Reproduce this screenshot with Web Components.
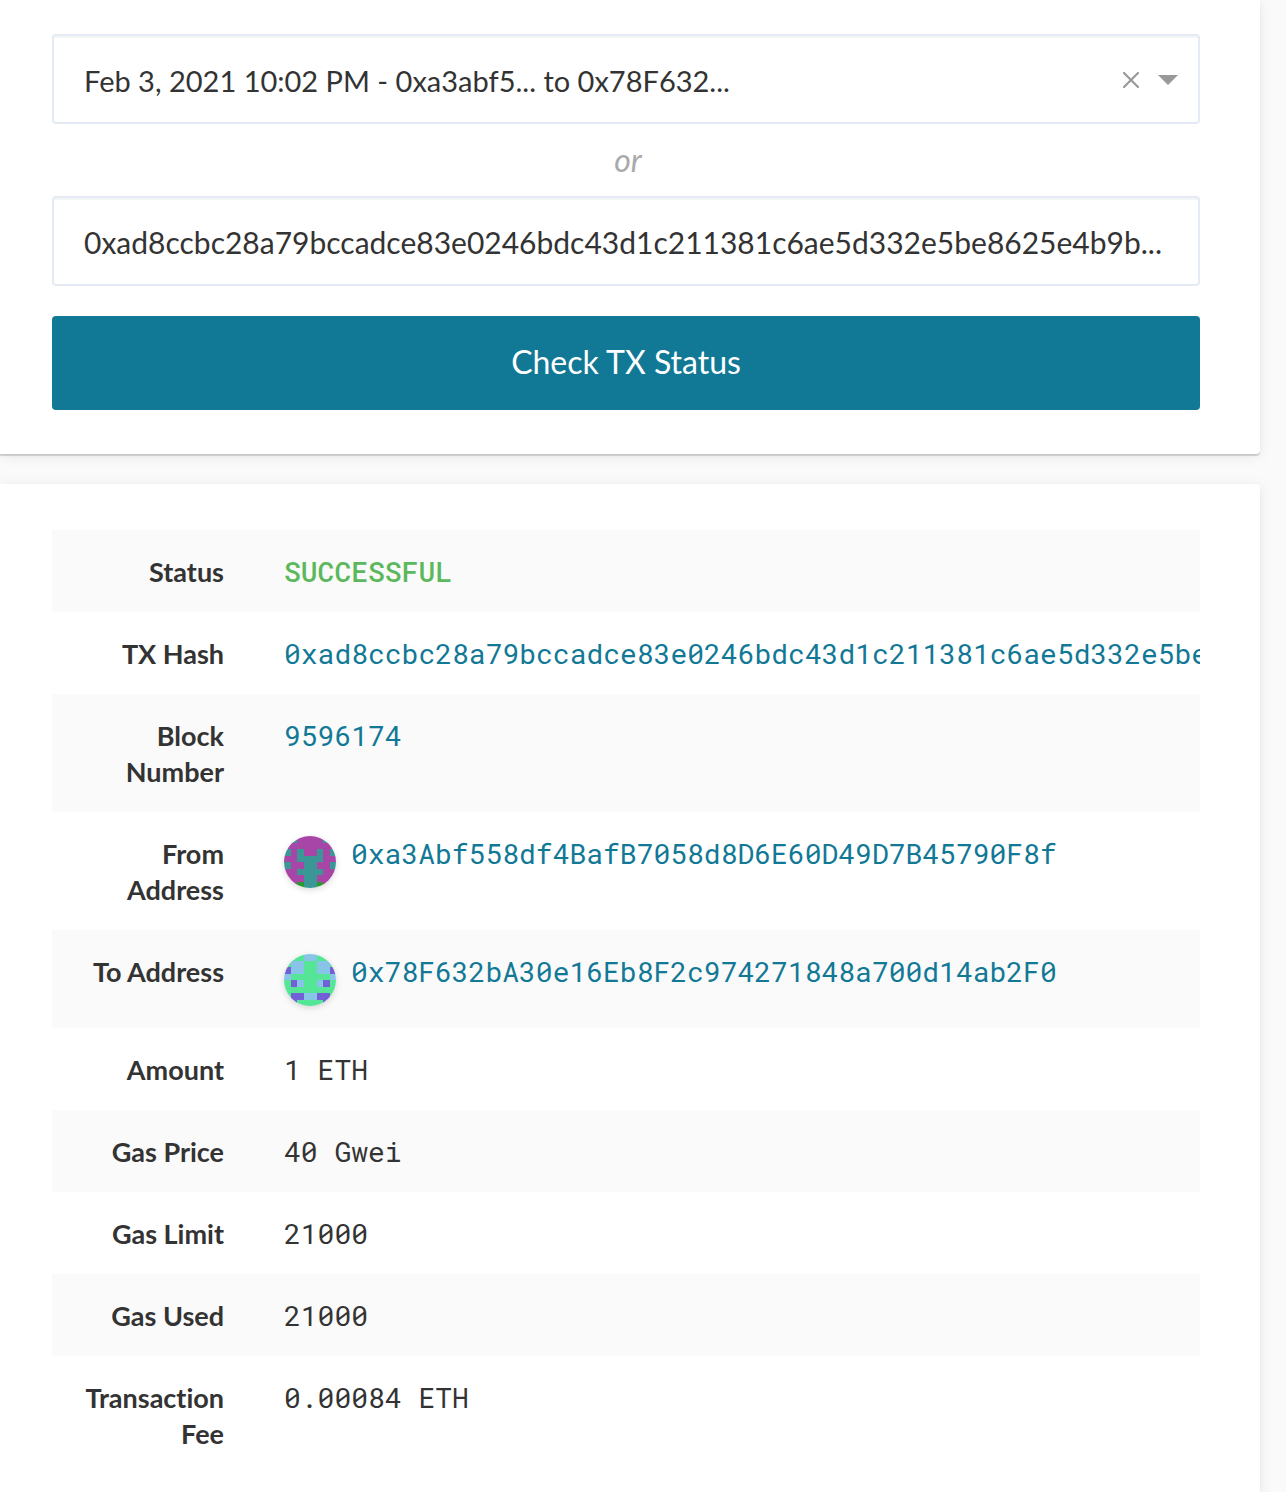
<!DOCTYPE html>
<html lang="en">
<head>
<meta charset="utf-8">
<title>Check TX Status</title>
<style>
html { background: #fafafa; }
body { margin: 0; font-family: Lato, sans-serif; color: #333; overflow: hidden; }
</style>
</head>
<body>
<tx-page></tx-page>
<script>
const define = (name, html, setup) => customElements.define(name, class extends HTMLElement {
  connectedCallback() {
    if (this.shadowRoot) return;
    const root = this.attachShadow({ mode: "open" });
    root.innerHTML = "<style>*{box-sizing:border-box}</style>" + html;
    if (setup) setup(this, root);
  }
});

define("tx-panel", `
<style>
:host { display: block; background: #fff; border-radius: 0 4px 4px 0; padding: 46px 60px 44px 52px;
  box-shadow: 0 2px 1px rgba(0,0,0,.16), 0 2px 14px rgba(0,0,0,.08); }
:host([top]) { padding-top: 34px; border-top-right-radius: 0; }
</style><slot></slot>`);

define("tx-select", `
<style>
:host { display: block; }
.box { display: flex; align-items: center; height: 90px; padding: 2px 20px 0 30px; border: 2px solid #e5ebf5;
  border-radius: 4px; background: #fff; box-shadow: inset 0 2px 0 #f4f6f6; }
select { flex: 1; min-width: 0; appearance: none; border: 0; padding: 2px 0 0; background: none; color: #333;
  font: 29px/44px Lato, sans-serif; height: 48px; outline: none; }
button { border: 0; padding: 0; margin-right: 18px; background: none; line-height: 0; }
svg { display: block; }
</style>
<div class="box">
<select aria-label="Recent transaction"><option>Feb 3, 2021 10:02 PM - 0xa3abf5... to 0x78F632...</option></select>
<button type="button" aria-label="Clear"><svg width="18" height="18" viewBox="0 0 18 18"><path d="M2 2L16 16M16 2L2 16" stroke="#999" stroke-width="2.2" stroke-linecap="round"/></svg></button>
<svg width="20" height="10" viewBox="0 0 20 10"><path d="M0 0H20L10 10Z" fill="#999"/></svg>
</div>`);

define("tx-hash-input", `
<style>
:host { display: block; }
input { display: block; width: 100%; height: 90px; padding: 2px 30px 0; border: 2px solid #e5ebf5; border-radius: 4px;
  box-shadow: inset 0 2px 0 #f4f6f6; font: 30px Lato, sans-serif; color: #333; text-overflow: ellipsis; outline: none; background: #fff; }
</style>
<input type="text" aria-label="Transaction hash" value="0xad8ccbc28a79bccadce83e0246bdc43d1c211381c6ae5d332e5be8625e4b9b...">`);

define("tx-button", `
<style>
:host { display: block; margin-top: 30px; }
button { display: block; width: 100%; height: 94px; padding: 0 0 4px; border: 0; border-radius: 4px; background: #117896; color: #fff; font: 32px Lato, sans-serif; }
</style>
<button type="button"><slot></slot></button>`);

define("tx-link", `
<style>
:host { display: inline; }
a { color: #117896; text-decoration: none; }
</style>
<a href="#"><slot></slot></a>`);

/* Eight-by-eight mirrored identicon; each row lists its left four cells. */
define("tx-identicon", `
<style>
:host { display: block; width: 52px; height: 52px; border-radius: 50%; overflow: hidden; flex: none; box-shadow: 0 2px 6px rgba(0,0,0,.15); }
svg { display: block; }
</style>
<svg width="52" height="52" viewBox="0 0 8 8" shape-rendering="crispEdges" aria-hidden="true"></svg>`,
(host, root) => {
  const colors = host.getAttribute("colors").split(" ");
  root.querySelector("svg").innerHTML = host.getAttribute("rows").split(" ").map((row, y) =>
    [...row, ...[...row].reverse()].map((c, x) => `<rect x="${x}" y="${y}" width="1" height="1" fill="${colors[c]}"/>`).join("")).join("");
});

define("tx-details", `
<style>
:host { display: block; }
table { width: 100%; table-layout: fixed; border-collapse: collapse; }
tr:nth-child(odd) { background: #fafafa; }
th, td { vertical-align: top; padding: 24px 0 22px; line-height: 36px; }
th { width: 202px; padding-left: 30px; padding-right: 30px; text-align: right; font-size: 27px; font-weight: 700; font-variant-ligatures: none; }
td { padding-left: 30px; font: 28px/36px "Roboto Mono", "Liberation Mono", monospace; white-space: nowrap; overflow: hidden; }
strong { font-weight: 500; color: #5cb85c; }
.address { display: flex; gap: 15px; }
</style>
<table><tbody>
<tr><th scope="row">Status</th><td><strong>SUCCESSFUL</strong></td></tr>
<tr><th scope="row">TX Hash</th><td><tx-link>0xad8ccbc28a79bccadce83e0246bdc43d1c211381c6ae5d332e5be</tx-link></td></tr>
<tr><th scope="row">Block Number</th><td><tx-link>9596174</tx-link></td></tr>
<tr><th scope="row">From Address</th><td><div class="address"><tx-identicon colors="#a846a8 #3a9795 #2a9a2a" rows="1100 0000 1010 0011 1001 0011 0001 0021"></tx-identicon><tx-link>0xa3Abf558df4BafB7058d8D6E60D49D7B45790F8f</tx-link></div></td></tr>
<tr><th scope="row">To Address</th><td><div class="address"><tx-identicon colors="#54e696 #88c4e8 #7460d6" rows="0001 0110 2110 1000 0210 0000 0221 0200"></tx-identicon><tx-link>0x78F632bA30e16Eb8F2c974271848a700d14ab2F0</tx-link></div></td></tr>
<tr><th scope="row">Amount</th><td>1 ETH</td></tr>
<tr><th scope="row">Gas Price</th><td>40 Gwei</td></tr>
<tr><th scope="row">Gas Limit</th><td>21000</td></tr>
<tr><th scope="row">Gas Used</th><td>21000</td></tr>
<tr><th scope="row">Transaction Fee</th><td>0.00084 ETH</td></tr>
</tbody></table>`);

define("tx-page", `
<style>
:host { display: flex; flex-direction: column; gap: 30px; padding-right: 26px; }
.or { margin: 0; height: 72px; padding-left: 4px; text-align: center; font: italic 32px/72px Lato, sans-serif; color: #aaa; }
</style>
<tx-panel top><tx-select></tx-select><p class="or">or</p><tx-hash-input></tx-hash-input><tx-button>Check TX Status</tx-button></tx-panel>
<tx-panel><tx-details></tx-details></tx-panel>`);
</script>
</body>
</html>
